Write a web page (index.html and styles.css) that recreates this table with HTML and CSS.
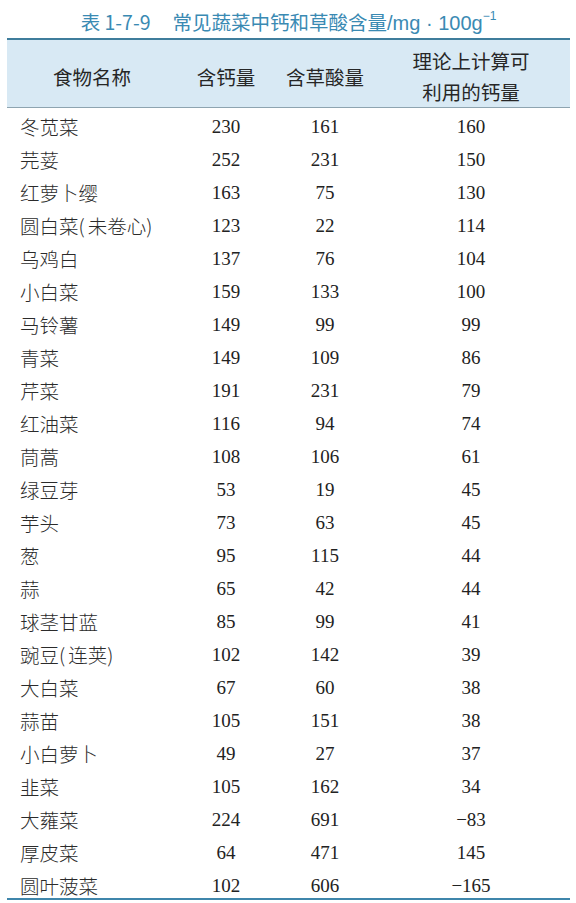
FILE: index.html
```html
<!DOCTYPE html>
<html lang="zh-CN">
<head>
<meta charset="utf-8">
<title>常见蔬菜中钙和草酸含量</title>
<link rel="stylesheet" href="styles.css">
</head>
<body>
<div class="page">
  <h1 class="title"><span class="tno">表 1-7-9</span><span class="tname">常见蔬菜中钙和草酸含量</span><span class="unit">/mg · 100g<sup>−1</sup></span></h1>
  <div class="table">
    <div class="head">
      <div class="hc">食物名称</div>
      <div class="hc">含钙量</div>
      <div class="hc">含草酸量</div>
      <div class="hc two">理论上计算可<br>利用的钙量</div>
    </div>
    <div class="body">
      <div class="row"><span class="name">冬苋菜</span><span class="num">230</span><span class="num">161</span><span class="num">160</span></div>
      <div class="row"><span class="name">芫荽</span><span class="num">252</span><span class="num">231</span><span class="num">150</span></div>
      <div class="row"><span class="name">红萝卜缨</span><span class="num">163</span><span class="num">75</span><span class="num">130</span></div>
      <div class="row"><span class="name">圆白菜(<span class="ps">未卷心</span>)</span><span class="num">123</span><span class="num">22</span><span class="num">114</span></div>
      <div class="row"><span class="name">乌鸡白</span><span class="num">137</span><span class="num">76</span><span class="num">104</span></div>
      <div class="row"><span class="name">小白菜</span><span class="num">159</span><span class="num">133</span><span class="num">100</span></div>
      <div class="row"><span class="name">马铃薯</span><span class="num">149</span><span class="num">99</span><span class="num">99</span></div>
      <div class="row"><span class="name">青菜</span><span class="num">149</span><span class="num">109</span><span class="num">86</span></div>
      <div class="row"><span class="name">芹菜</span><span class="num">191</span><span class="num">231</span><span class="num">79</span></div>
      <div class="row"><span class="name">红油菜</span><span class="num">116</span><span class="num">94</span><span class="num">74</span></div>
      <div class="row"><span class="name">茼蒿</span><span class="num">108</span><span class="num">106</span><span class="num">61</span></div>
      <div class="row"><span class="name">绿豆芽</span><span class="num">53</span><span class="num">19</span><span class="num">45</span></div>
      <div class="row"><span class="name">芋头</span><span class="num">73</span><span class="num">63</span><span class="num">45</span></div>
      <div class="row"><span class="name">葱</span><span class="num">95</span><span class="num">115</span><span class="num">44</span></div>
      <div class="row"><span class="name">蒜</span><span class="num">65</span><span class="num">42</span><span class="num">44</span></div>
      <div class="row"><span class="name">球茎甘蓝</span><span class="num">85</span><span class="num">99</span><span class="num">41</span></div>
      <div class="row"><span class="name">豌豆(<span class="ps">连荚</span>)</span><span class="num">102</span><span class="num">142</span><span class="num">39</span></div>
      <div class="row"><span class="name">大白菜</span><span class="num">67</span><span class="num">60</span><span class="num">38</span></div>
      <div class="row"><span class="name">蒜苗</span><span class="num">105</span><span class="num">151</span><span class="num">38</span></div>
      <div class="row"><span class="name">小白萝卜</span><span class="num">49</span><span class="num">27</span><span class="num">37</span></div>
      <div class="row"><span class="name">韭菜</span><span class="num">105</span><span class="num">162</span><span class="num">34</span></div>
      <div class="row"><span class="name">大蕹菜</span><span class="num">224</span><span class="num">691</span><span class="num">−83</span></div>
      <div class="row"><span class="name">厚皮菜</span><span class="num">64</span><span class="num">471</span><span class="num">145</span></div>
      <div class="row"><span class="name">圆叶菠菜</span><span class="num">102</span><span class="num">606</span><span class="num">−165</span></div>
    </div>
  </div>
</div>
</body>
</html>
```
FILE: styles.css
```css
* { box-sizing: border-box; }
html, body { margin: 0; padding: 0; background: #ffffff; }
body {
  width: 576px;
  height: 903px;
  overflow: hidden;
  color: #262626;
  font-family: "Noto Sans CJK SC", "Noto Sans", sans-serif;
}
.page { padding: 0 6px 0 7px; }
.title {
  margin: 0;
  height: 38px;
  padding-top: 9px;
  text-align: center;
  font-size: 19.5px;
  font-weight: 400;
  line-height: 26px;
  color: #3a8ab3;
  white-space: nowrap;
}
.tno { margin-right: 22px; }
.unit { font-family: "Liberation Sans", Arial, sans-serif; font-size: 20px; }
.unit sup { font-size: 12px; vertical-align: 10px; line-height: 0; }
.table { width: 563px; }
.head {
  display: grid;
  grid-template-columns: 170px 98px 100px 192px 1fr;
  align-items: center;
  height: 70px;
  background: #d8e9f4;
  border-top: 2px solid #3f7d9c;
  border-bottom: 1px solid #8ea4b0;
  padding-top: 4px;
  font-size: 19.5px;
  color: #262626;
}
.hc { text-align: center; line-height: 24px; padding-top: 2px; }
.hc.two { line-height: 31px; padding-top: 0; }
.body { padding-top: 2px; border-bottom: 2px solid #3f86ab; }
.row {
  display: grid;
  grid-template-columns: 170px 98px 100px 192px 1fr;
  height: 33px;
  line-height: 33px;
  align-items: start;
}
.row:last-child { height: 29px; }
.name {
  padding-left: 13px;
  font-size: 19.5px;
  font-weight: 300;
  color: #2b2b2b;
  white-space: nowrap;
}
.ps { margin-left: 3px; }
.num {
  text-align: center;
  font-family: "Liberation Serif", "Times New Roman", serif;
  font-size: 19px;
  color: #222;
}
```
